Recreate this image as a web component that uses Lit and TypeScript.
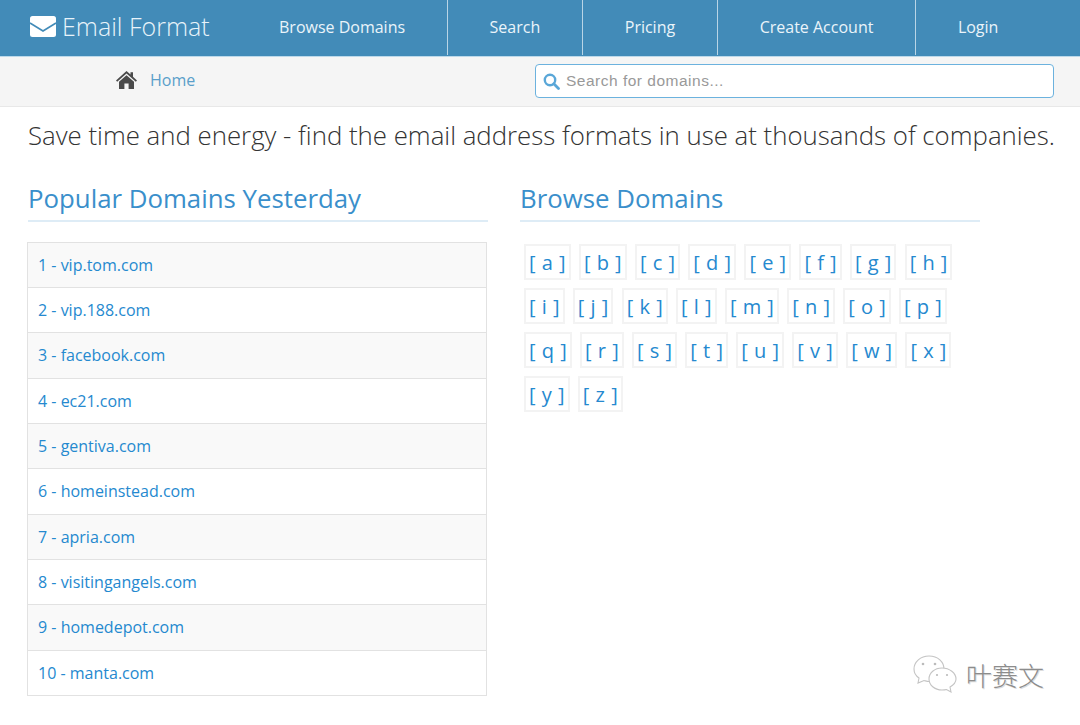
import { LitElement, html, css } from "lit";
import { customElement } from "lit/decorators.js";

const domains = ["vip.tom.com","vip.188.com","facebook.com","ec21.com","gentiva.com","homeinstead.com","apria.com","visitingangels.com","homedepot.com","manta.com"];
const letters = "abcdefghijklmnopqrstuvwxyz".split("");
const nav = ["Browse Domains","Search","Pricing","Create Account","Login"];

@customElement("app-root")
export class AppRoot extends LitElement {
  static styles = css`
    :host { display:block; position:relative; width:1080px; height:725px; overflow:hidden; background:#fff; font-family:"Open Sans",sans-serif; color:#333; }
    a { text-decoration:none; color:inherit; }
    .top { height:55.7px; background:#428bb8; border-bottom:1px solid #bcd9ea; display:flex; align-items:stretch; color:#eaf4fa; }
    .brand { width:237px; box-sizing:border-box; padding:0 0 3px 30px; display:flex; align-items:center; gap:6px; font-weight:300; font-size:25px; color:#e8f3fa; white-space:nowrap; }
    .brand svg { flex:none; }
    .nav { display:flex; align-items:stretch; }
    .nav a { display:flex; align-items:center; padding:0 41.5px 0 42px; font-size:16px; border-right:1.5px solid #b9d5e6; margin-bottom:1px; white-space:nowrap; }
    .nav a:last-child { border-right:none; }
    .sub { height:49px; background:#f5f5f5; border-bottom:1px solid #e8e8e8; display:flex; align-items:center; }
    .home { display:flex; align-items:center; margin-left:116px; gap:13px; font-size:16px; color:#5a9fca; width:419px; line-height:20px; }
    .home span { margin-top:-2px; }
    .home svg { margin-top:-3px; }
    .search { width:519px; height:34px; box-sizing:border-box; border:1.5px solid #6cb2de; border-radius:4px; background:#fff; display:flex; align-items:center; padding-left:7px; gap:6px; font-family:"Liberation Sans",sans-serif; font-size:15.5px; color:#999; letter-spacing:.5px; }
    .tag { margin:12.3px 0 0 28px; font-weight:300; font-size:25.8px; line-height:32px; color:#333; white-space:nowrap; }
    .cols { display:flex; gap:32px; margin:30px 0 0 28px; }
    .col { width:460px; }
    h2 { margin:0; font-weight:400; font-size:25.8px; line-height:34px; height:39px; color:#3a8fcb; border-bottom:2px solid #deecf6; white-space:nowrap; }
    .list { margin:20px 0 0 -1px; width:460px; box-sizing:border-box; border:1.5px solid #e2e2e2; }
    .row { height:45.33px; box-sizing:border-box; display:flex; align-items:center; padding-left:10px; font-size:16px; color:#2589cf; border-top:1.5px solid #e2e2e2; }
    .row:first-child { border-top:none; height:44px; }
    .row:nth-child(odd) { background:#f9f9f9; }
    .letters { display:flex; flex-wrap:wrap; margin:22px 0 0 4px; gap:8px 8.3px; width:456px; }
    .letters a { box-sizing:border-box; height:36px; padding:1px 2.5px 0 3px; display:flex; align-items:center; border:2px solid #f3f3f3; font-size:20px; letter-spacing:.5px; color:#2589cf; white-space:pre; }
    .wm { position:absolute; left:913px; top:655px; display:flex; align-items:center; gap:9px; color:#8c8c8c; font-family:"Noto Sans CJK SC",sans-serif; font-size:26px; font-weight:300; text-shadow:1px 1px 0 #ddd; }
  `;
  render() {
    return html`
      <div class="top">
        <a class="brand" href="#">
          <svg width="26" height="21" viewBox="0 0 26 21"><rect width="26" height="21" rx="2.5" fill="#fff"/><path d="M0 7 L13 15 L26 7" fill="none" stroke="#428bb8" stroke-width="1.6"/></svg>
          Email Format
        </a>
        <div class="nav">${nav.map(n => html`<a href="#">${n}</a>`)}</div>
      </div>
      <div class="sub">
        <a class="home" href="#">
          <svg width="21" height="18" viewBox="0 0 21 18"><path fill="#4a4a4a" d="M10.5 0 L14.5 3.6 V1.2 H17 V5.8 L21 9.4 L19.8 10.7 L10.5 2.6 L1.2 10.7 L0 9.4 Z"/><path fill="#4a4a4a" d="M10.5 4.2 L18 10.7 V18 H12.6 V12.6 H8.4 V18 H3 V10.7 Z"/></svg>
          <span>Home</span>
        </a>
        <div class="search">
          <svg width="17" height="17" viewBox="0 0 17 17"><circle cx="7" cy="7" r="5.2" fill="none" stroke="#5aa7d8" stroke-width="2.4"/><path d="M10.8 10.8 L15.5 15.5" stroke="#5aa7d8" stroke-width="2.8" stroke-linecap="round"/></svg>
          <span>Search for domains...</span>
        </div>
      </div>
      <div class="tag">Save time and energy - find the email address formats in use at thousands of companies.</div>
      <div class="cols">
        <div class="col">
          <h2>Popular Domains Yesterday</h2>
          <div class="list">${domains.map((d,i)=>html`<div class="row"><a href="#">${i+1} - ${d}</a></div>`)}</div>
        </div>
        <div class="col">
          <h2>Browse Domains</h2>
          <div class="letters">${letters.map(l=>html`<a href="#">[ ${l} ]</a>`)}</div>
        </div>
      </div>
      <div class="wm">
        <svg width="44" height="38" viewBox="0 0 44 38" fill="none" stroke="#c4c4c4" stroke-width="1.1">
          <path d="M16 1 C7.5 1 1 7 1 14 C1 18 3 21 6 23 L5 28 L11 25.5 C13 26 14 26.5 16 26.5 C25 26 31 20 31 14 C31 7 25 1 16 1 Z" fill="#fff"/>
          <circle cx="10" cy="9" r="1.3" fill="#bbb" stroke="none"/><circle cx="22" cy="9" r="1.3" fill="#bbb" stroke="none"/>
          <path d="M29 13 C21.5 13 16 18 16 24 C16 30 21.5 35 29 35 C30.5 35 32 35 33.5 34.5 L38 37 L37 32 C40.5 30 43 27.5 43 24 C43 18 36.5 13 29 13 Z" fill="#fff"/>
          <circle cx="24" cy="20" r="1.1" fill="#bbb" stroke="none"/><circle cx="34" cy="20" r="1.1" fill="#bbb" stroke="none"/>
        </svg>
        <span>叶赛文</span>
      </div>
    `;
  }
}
